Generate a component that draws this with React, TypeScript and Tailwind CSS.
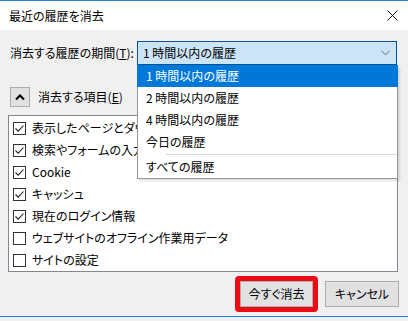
import React from 'react';

const font = "font-['Noto_Sans_CJK_JP','Noto_Sans',sans-serif] [font-feature-settings:'palt']";

const items: { label: string; checked: boolean }[] = [
    { label: '表示したページとダウンロードの履歴', checked: true },
    { label: '検索やフォームの入力履歴', checked: true },
    { label: 'Cookie', checked: true },
    { label: 'キャッシュ', checked: true },
    { label: '現在のログイン情報', checked: true },
    { label: 'ウェブサイトのオフライン作業用データ', checked: false },
    { label: 'サイトの設定', checked: false },
];

const periods = ['1 時間以内の履歴', '2 時間以内の履歴', '4 時間以内の履歴', '今日の履歴'];

function CheckBox({ checked }: { checked: boolean }) {
    return (
        <span className="flex h-[13px] w-[13px] shrink-0 items-center justify-center border border-[#333333] bg-white">
            {checked && (
                <svg width="11" height="11" viewBox="0 0 11 11">
                    <path d="M1.5 5.5 L4.2 8.2 L9.5 2.5" fill="none" stroke="#222" strokeWidth="1.1" />
                </svg>
            )}
        </span>
    );
}

export default function App() {
    return (
        <div className={`relative h-[321px] w-[408px] overflow-hidden bg-[#f0f0f0] text-[12px] text-black ${font}`}>
            <div className="h-px bg-[#2b7fd4]" />
            <div className="flex h-[29px] items-center justify-between bg-white pl-[9px] pr-[10px]">
                <span className="text-[12px] leading-none">最近の履歴を消去</span>
                <svg width="11" height="11" viewBox="0 0 11 11">
                    <path d="M0.5 0.5 L10.5 10.5 M10.5 0.5 L0.5 10.5" stroke="#111" strokeWidth="1" />
                </svg>
            </div>

            <div className="px-[8px]">
                <div className="mt-[11px] flex items-center">
                    <span className="w-[129px] pl-[2px] leading-none">
                        消去する履歴の期間(<span className="underline">T</span>):
                    </span>
                    <div className="flex h-[24px] w-[260px] items-center justify-between border border-[#005499] bg-[#cce4f7] pl-[5px] pr-[6px]">
                        <span className="leading-none">1 時間以内の履歴</span>
                        <svg width="9" height="6" viewBox="0 0 9 6">
                            <path d="M0.5 0.8 L4.5 4.8 L8.5 0.8" fill="none" stroke="#666" strokeWidth="1" />
                        </svg>
                    </div>
                </div>

                <div className="mt-[22px] flex items-center gap-[8px]">
                    <button className="ml-[2px] flex h-[20px] w-[20px] items-center justify-center border border-[#adadad] bg-[#e1e1e1]">
                        <svg width="10" height="7" viewBox="0 0 10 7">
                            <path d="M1 5.5 L5 1.5 L9 5.5" fill="none" stroke="#000" strokeWidth="2" />
                        </svg>
                    </button>
                    <span className="leading-none">
                        消去する項目(<span className="underline">E</span>)
                    </span>
                </div>

                <div className="mt-[8px] h-[157px] w-[390px] border border-[#828790] bg-white pt-px">
                    {items.map((item) => (
                        <div key={item.label} className="flex h-[22px] items-center gap-[6px] pl-[4px]">
                            <CheckBox checked={item.checked} />
                            <span className="leading-none whitespace-nowrap">{item.label}</span>
                        </div>
                    ))}
                </div>

                <div className="mt-[4px] flex items-center justify-end gap-[7px] pr-[1px]">
                    <div className="rounded-[4px] border-[5px] border-[#ee0a14]">
                        <button className="flex h-[26px] w-[73px] items-center justify-center border border-[#adadad] bg-[#e1e1e1] leading-none">
                            今すぐ消去
                        </button>
                    </div>
                    <button className="flex h-[26px] w-[74px] items-center justify-center border border-[#adadad] bg-[#e1e1e1] leading-none">
                        キャンセル
                    </button>
                </div>
            </div>

            <div className="mt-[4px] h-px bg-[#2b7fd4]" />

            <div className="absolute left-[137px] top-[65px] w-[261px] border border-t-0 border-[#979797] bg-white shadow-[2px_2px_2px_rgba(0,0,0,0.12)]">
                {periods.map((p, i) => (
                    <div
                        key={p}
                        className={`flex h-[22px] items-center pl-[8px] leading-none ${i === 0 ? '-mx-px bg-[#0078d7] pl-[9px] text-white' : ''}`}
                    >
                        {p}
                    </div>
                ))}
                <div className="my-[1px] ml-[28px] h-px bg-[#d7d7d7]" />
                <div className="flex h-[22px] items-center pl-[8px] leading-none">すべての履歴</div>
            </div>
        </div>
    );
}
